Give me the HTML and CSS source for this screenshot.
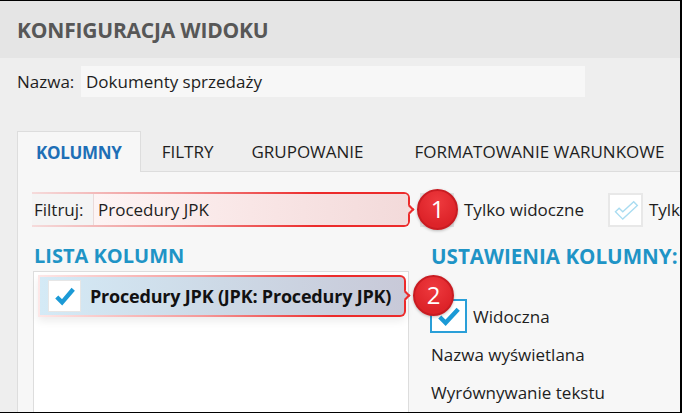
FILE: index.html
```html
<!DOCTYPE html>
<html lang="pl">
<head>
  <meta charset="UTF-8">
  <meta name="viewport" content="width=device-width, initial-scale=1.0">
  <title>Konfiguracja widoku</title>
  <link rel="stylesheet" href="styles.css">
</head>
<body>
  <div class="frame">
    <header class="title-bar">
      <h1>KONFIGURACJA WIDOKU</h1>
    </header>

    <div class="name-row">
      <span class="name-label">Nazwa:</span>
      <div class="name-input">Dokumenty sprzedaży</div>
    </div>

    <nav class="tabs">
      <div class="tab active">KOLUMNY</div>
      <div class="tab">FILTRY</div>
      <div class="tab">GRUPOWANIE</div>
      <div class="tab">FORMATOWANIE WARUNKOWE</div>
    </nav>

    <div class="panel">
      <div class="filter-row">
        <div class="callout filter-callout">
          <div class="callout-inner filter-inner">
            <span class="filter-label">Filtruj:</span>
            <span class="filter-input">Procedury JPK</span>
          </div>
          <span class="badge">1</span>
        </div>

        <span class="checkbox faint">
          <svg viewBox="0 0 34 34" width="34" height="34"><path d="M7 18 L11 14 L15 18 L26 7 L30 11 L15 26 Z" fill="none" stroke="#d6d6d6" stroke-width="1.5"/></svg>
        </span>
        <span class="option">Tylko widoczne</span>

        <span class="checkbox light">
          <svg viewBox="0 0 34 34" width="34" height="34"><path d="M6 19 L10 15 L14 19 L26 8 L30 12 L14 27 Z" fill="#fff" stroke="#a9dcf1" stroke-width="1.5"/></svg>
        </span>
        <span class="option clipped">Tylko zaznaczone</span>
      </div>

      <div class="columns">
        <section class="col-list">
          <h2>LISTA KOLUMN</h2>
          <div class="list-box">
            <div class="callout row-callout">
              <div class="callout-inner row-selected">
                <span class="checkbox white">
                  <svg viewBox="0 0 32 32" width="32" height="32"><path d="M8 17 L13.5 22.5 L25 9" fill="none" stroke="#1b9ad6" stroke-width="4.5"/></svg>
                </span>
                <span class="row-text">Procedury JPK (JPK: Procedury JPK)</span>
              </div>
              <span class="badge">2</span>
            </div>
          </div>
        </section>

        <section class="col-settings">
          <h2>USTAWIENIA KOLUMNY:</h2>
          <div class="setting check-setting">
            <span class="checkbox blue">
              <svg viewBox="0 0 34 32" width="34" height="32"><path d="M8 17 L14 23 L27 9" fill="none" stroke="#1b9ad6" stroke-width="4.5"/></svg>
            </span>
            <span>Widoczna</span>
          </div>
          <div class="setting">Nazwa wyświetlana</div>
          <div class="setting">Wyrównywanie tekstu</div>
        </section>
      </div>
    </div>
  </div>
</body>
</html>
```

FILE: styles.css
```css
body {
  margin: 0;
  padding: 0;
  font-family: 'Open Sans', 'Noto Sans', Arial, sans-serif;
  color: #1e1e1e;
}

.frame {
  width: 682px;
  height: 413px;
  box-sizing: border-box;
  border-top: 1px solid #000;
  border-right: 2px solid #000;
  border-bottom: 1px solid #000;
  background-color: #eeeeee;
  display: flex;
  flex-direction: column;
  overflow: hidden;
}

.title-bar {
  height: 57px;
  flex-shrink: 0;
  background-color: #e5e5e5;
  display: flex;
  align-items: center;
  padding-left: 17px;
}

h1 {
  margin: 0;
  font-size: 21px;
  font-weight: 700;
  color: #575757;
  letter-spacing: -0.2px;
}

.name-row {
  display: flex;
  align-items: center;
  height: 31px;
  margin-top: 8px;
  padding-left: 17px;
  font-size: 17px;
}

.name-label {
  width: 64px;
}

.name-input {
  width: 504px;
  height: 31px;
  box-sizing: border-box;
  padding-left: 5px;
  background-color: #f7f7f7;
  display: flex;
  align-items: center;
}

.tabs {
  display: flex;
  height: 40px;
  margin: 34px 0 0 17px;
  border-bottom: 1px solid #dddddd;
  flex-shrink: 0;
}

.tab {
  display: flex;
  align-items: center;
  font-size: 17px;
  padding: 0 19px;
  white-space: nowrap;
}

.tab.active {
  padding: 0 18px;
  background-color: #f7f7f7;
  border: 1px solid #dddddd;
  border-bottom: none;
  margin-bottom: -1px;
  height: 40px;
  font-weight: 700;
  color: #1e6fb6;
  letter-spacing: -0.3px;
}

.tab:nth-child(2) {
  padding-left: 21px;
}

.tab:nth-child(4) {
  padding-left: 32px;
}

.panel {
  flex: 1;
  margin-left: 17px;
  border-left: 1px solid #dddddd;
  background-color: #f7f7f7;
  display: flex;
  flex-direction: column;
  min-height: 0;
}

.filter-row {
  display: flex;
  align-items: center;
  height: 35px;
  margin-top: 20px;
  padding-left: 14px;
  font-size: 17px;
  white-space: nowrap;
}

/* ramka podświetlenia z czerwoną krawędzią */
.callout {
  position: relative;
  box-sizing: border-box;
  padding: 2px;
  border-radius: 0 6px 6px 0;
  background: linear-gradient(90deg, rgba(235, 60, 60, 0.15), rgba(235, 50, 50, 0.55) 40%, #ec2b2b 75%);
  flex-shrink: 0;
}

.callout::after {
  content: '';
  position: absolute;
  right: -3px;
  top: 50%;
  width: 5px;
  height: 5px;
  margin-top: -4px;
  border-top: 2px solid #ec2b2b;
  border-right: 2px solid #ec2b2b;
  transform: rotate(45deg);
  background-color: #f3dcdc;
}

.callout-inner {
  display: flex;
  align-items: center;
  height: 100%;
  border-radius: 0 4px 4px 0;
}

.filter-callout {
  width: 378px;
  height: 35px;
  padding-left: 0;
}

.filter-inner {
  background-color: #f4f4f4;
}

.filter-label {
  width: 61px;
  padding-left: 2px;
  box-sizing: border-box;
}

.filter-input {
  flex: 1;
  height: 100%;
  display: flex;
  align-items: center;
  padding-left: 4px;
  border-left: 1px solid #eadada;
  border-radius: 0 4px 4px 0;
  background: linear-gradient(90deg, #fdf4f4, #f9e6e6 50%, #f3dada);
}

.badge {
  position: absolute;
  top: 50%;
  right: -48px;
  width: 41px;
  height: 41px;
  margin-top: -21px;
  box-sizing: border-box;
  border: 2px solid #c81c22;
  border-radius: 50%;
  background: radial-gradient(circle at 50% 30%, #ee3a3e, #dd2329 70%);
  box-shadow: 0 1px 3px rgba(0, 0, 0, 0.25);
  color: #fff;
  font-size: 24px;
  line-height: 36px;
  text-align: center;
  z-index: 2;
}

.checkbox {
  display: inline-flex;
  align-items: center;
  justify-content: center;
  box-sizing: border-box;
  flex-shrink: 0;
  background-color: #fff;
}

.checkbox.faint {
  width: 34px;
  height: 34px;
  margin-left: 10px;
  border: 2px solid #e2e2e2;
  background-color: #f4f4f4;
}

.checkbox.light {
  width: 35px;
  height: 34px;
  margin-left: 24px;
  border: 2px solid #e8e8e8;
}

.option {
  margin-left: 10px;
}

.option.clipped {
  margin-left: 6px;
}

.columns {
  display: flex;
  flex: 1;
  min-height: 0;
  margin-top: 15px;
}

h2 {
  margin: 0 0 0 1px;
  font-size: 20px;
  font-weight: 700;
  color: #1f94c6;
  line-height: 28px;
  white-space: nowrap;
}

.col-settings h2 {
  font-size: 20.6px;
}

.col-list {
  width: 376px;
  margin-left: 15px;
  display: flex;
  flex-direction: column;
}

.list-box {
  flex: 1;
  margin-top: 1px;
  background-color: #fff;
  border: 1px solid #dddddd;
  border-bottom: none;
  padding: 3px 3px 0 4px;
}

.row-callout {
  width: 368px;
  height: 42px;
  background: linear-gradient(90deg, rgba(235, 60, 60, 0.12), rgba(235, 50, 50, 0.5) 45%, #ec2b2b 80%);
  box-shadow: 0 4px 8px rgba(0, 0, 0, 0.08);
}

.row-callout::after {
  background-color: #c9cad8;
}

.row-selected {
  background: linear-gradient(90deg, #d4eaf6, #cdd9e6 50%, #c8c9d8);
  padding-left: 8px;
}

.checkbox.white {
  width: 33px;
  height: 32px;
  border: 1px solid #e6e6e6;
}

.row-text {
  margin-left: 9px;
  font-size: 18px;
  font-weight: 700;
  color: #111;
  white-space: nowrap;
  letter-spacing: -0.2px;
}

.col-settings {
  margin-left: 21px;
  display: flex;
  flex-direction: column;
  font-size: 17px;
}

.setting {
  display: flex;
  align-items: center;
  height: 38px;
  padding-left: 1px;
  white-space: nowrap;
}

.check-setting {
  margin-top: 29px;
  height: 34px;
  padding-left: 0;
  margin-bottom: 2px;
}

.checkbox.blue {
  width: 37px;
  height: 34px;
  border: 2px solid #2a9fd8;
  margin-right: 6px;
}
```
